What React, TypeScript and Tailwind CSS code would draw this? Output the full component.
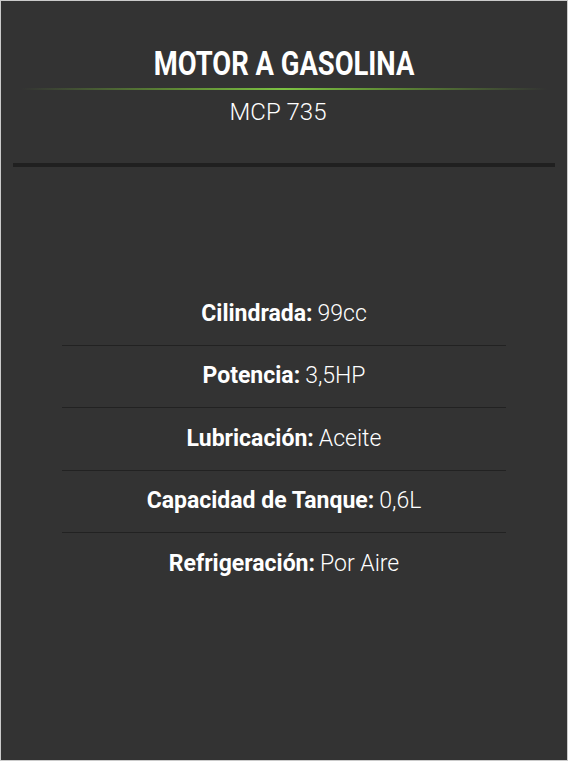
import React from 'react'

const SPECS = [
  { label: 'Cilindrada:', value: '99cc' },
  { label: 'Potencia:', value: '3,5HP' },
  { label: 'Lubricación:', value: 'Aceite' },
  { label: 'Capacidad de Tanque:', value: '0,6L' },
  { label: 'Refrigeración:', value: 'Por Aire' },
]

export default function App() {
  return (
    <div
      className="w-[568px] h-[761px] bg-[#333333] border border-[#cbcbcb] text-white overflow-hidden"
      style={{ fontFamily: 'Roboto, "Liberation Sans", sans-serif' }}
    >
      <div className="pt-[44px] text-center">
        <h1 className="text-[33px] leading-[38px] font-bold uppercase">
          <span className="inline-block scale-x-[0.83]">Motor a Gasolina</span>
        </h1>
        <div className="mx-[20px] mt-[5px] h-[2px] bg-[linear-gradient(to_right,transparent_0%,#5f8a35_30%,#7cc242_50%,#5f8a35_70%,transparent_100%)]"></div>
        <p className="mt-[7px] pr-[12px] text-[24px] leading-[30px] font-light">MCP 735</p>
      </div>
      <div className="mx-[12px] mt-[36px] h-[4px] bg-[#202020]"></div>

      <div className="mx-[61px] mt-[116px]">
        {SPECS.map((spec, i) => (
          <div
            key={i}
            className={
              'h-[62.5px] flex items-center justify-center gap-[5px] text-[23px] ' +
              (i < SPECS.length - 1 ? 'border-b border-[#222222]' : '')
            }
          >
            <span className="font-bold">{spec.label}</span>
            <span className="font-light">{spec.value}</span>
          </div>
        ))}
      </div>
    </div>
  )
}
